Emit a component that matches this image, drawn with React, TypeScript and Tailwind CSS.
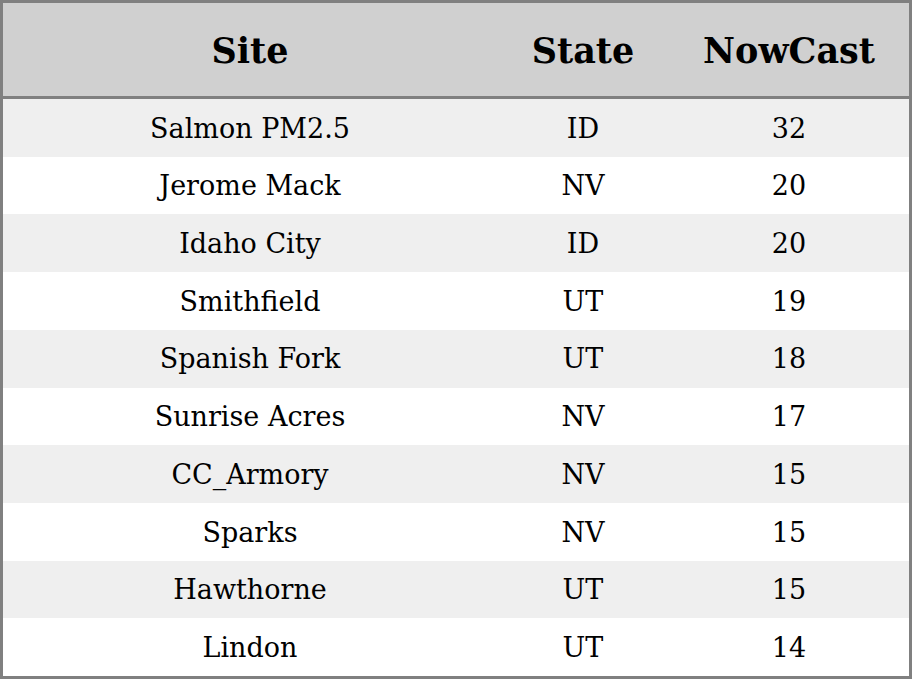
import React from "react";

const rows: [string, string, string][] = [
  ["Salmon PM2.5", "ID", "32"],
  ["Jerome Mack", "NV", "20"],
  ["Idaho City", "ID", "20"],
  ["Smithfield", "UT", "19"],
  ["Spanish Fork", "UT", "18"],
  ["Sunrise Acres", "NV", "17"],
  ["CC_Armory", "NV", "15"],
  ["Sparks", "NV", "15"],
  ["Hawthorne", "UT", "15"],
  ["Lindon", "UT", "14"],
];

export default function App() {
  return (
    <div
      className="w-[912px] h-[679px] bg-white border-[3px] border-[#808080] flex flex-col text-black"
      style={{ fontFamily: '"DejaVu Serif", serif' }}
    >
      <div className="h-[96px] shrink-0 pt-[3px] bg-[#d0d0d0] border-b-[3px] border-[#808080] grid grid-cols-[494px_172px_240px] items-center text-[35px] font-bold">
        <div className="text-center">Site</div>
        <div className="text-center">State</div>
        <div className="text-center">NowCast</div>
      </div>
      <div className="flex-1 flex flex-col">
        {rows.map((r, i) => (
          <div
            key={i}
            className={`flex-1 pt-[2px] grid grid-cols-[494px_172px_240px] items-center text-[27px] ${
              i % 2 === 0 ? "bg-[#efefef]" : "bg-white"
            }`}
          >
            <div className="text-center">{r[0]}</div>
            <div className="text-center">{r[1]}</div>
            <div className="text-center">{r[2]}</div>
          </div>
        ))}
      </div>
    </div>
  );
}
